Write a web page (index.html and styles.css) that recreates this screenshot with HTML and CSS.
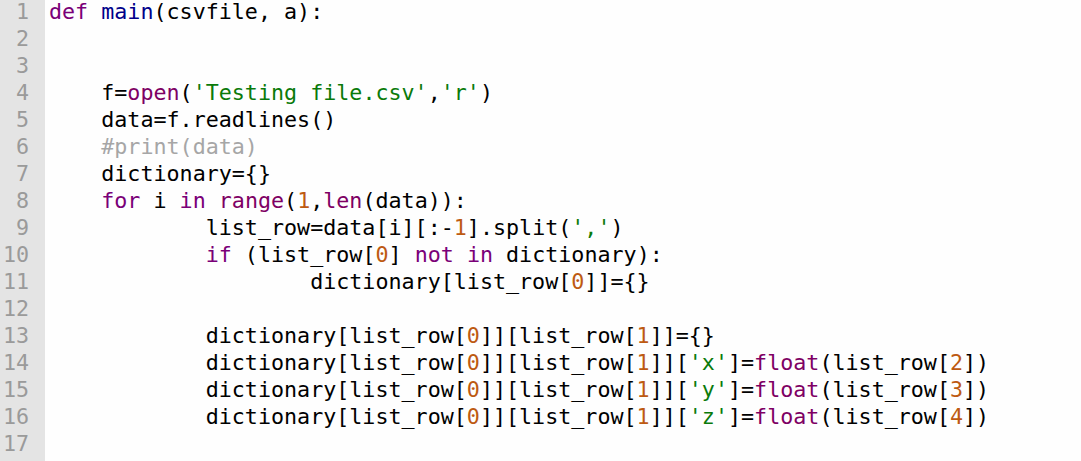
FILE: index.html
```html
<!DOCTYPE html>
<html>
<head>
<meta charset="utf-8">
<link rel="stylesheet" href="styles.css">
</head>
<body>
<div class="editor">
<div class="gutter"><div>1</div><div>2</div><div>3</div><div>4</div><div>5</div><div>6</div><div>7</div><div>8</div><div>9</div><div>10</div><div>11</div><div>12</div><div>13</div><div>14</div><div>15</div><div>16</div><div>17</div></div>
<div class="code"><div><span class="kw">def</span> <span class="def">main</span>(csvfile, a):</div><div> </div><div> </div><div>    f=<span class="bi">open</span>(<span class="str">'Testing file.csv'</span>,<span class="str">'r'</span>)</div><div>    data=f.readlines()</div><div>    <span class="cm">#print(data)</span></div><div>    dictionary={}</div><div>    <span class="kw">for</span> i <span class="kw">in</span> <span class="bi">range</span>(<span class="num">1</span>,<span class="bi">len</span>(data)):</div><div>            list_row=data[i][:-<span class="num">1</span>].split(<span class="str">','</span>)</div><div>            <span class="kw">if</span> (list_row[<span class="num">0</span>] <span class="kw">not</span> <span class="kw">in</span> dictionary):</div><div>                    dictionary[list_row[<span class="num">0</span>]]={}</div><div> </div><div>            dictionary[list_row[<span class="num">0</span>]][list_row[<span class="num">1</span>]]={}</div><div>            dictionary[list_row[<span class="num">0</span>]][list_row[<span class="num">1</span>]][<span class="str">'x'</span>]=<span class="bi">float</span>(list_row[<span class="num">2</span>])</div><div>            dictionary[list_row[<span class="num">0</span>]][list_row[<span class="num">1</span>]][<span class="str">'y'</span>]=<span class="bi">float</span>(list_row[<span class="num">3</span>])</div><div>            dictionary[list_row[<span class="num">0</span>]][list_row[<span class="num">1</span>]][<span class="str">'z'</span>]=<span class="bi">float</span>(list_row[<span class="num">4</span>])</div><div> </div></div>
</div>
</body>
</html>
```
FILE: styles.css
```css
html, body {
  margin: 0;
  padding: 0;
  background: #fefefe;
  height: 100%;
  overflow: hidden;
}
.editor {
  display: flex;
  height: 100%;
  font-family: "DejaVu Sans Mono", "Liberation Mono", monospace;
  font-size: 21.7px;
  line-height: 27px;
  color: #000;
}
.gutter {
  width: 29px;
  padding-right: 16px;
  background: #e4e4e4;
  color: #9a9a9a;
  text-align: right;
  flex: none;
}
.gutter div, .code div {
  height: 27px;
  position: relative;
  top: -2px;
}
.code {
  padding-left: 4px;
  white-space: pre;
}
.kw { color: #7a0078; }
.def { color: #00008a; }
.bi { color: #7e0064; }
.str { color: #0a7a0a; }
.num { color: #bd5a12; }
.cm { color: #a6a6a6; }
```
